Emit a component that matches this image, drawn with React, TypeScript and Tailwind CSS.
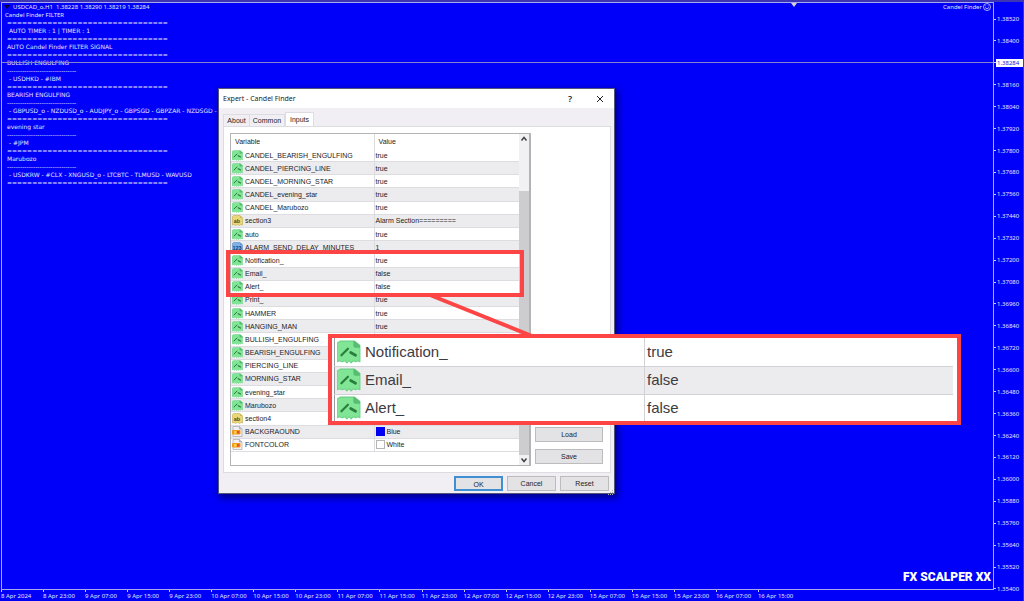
import clsx from "clsx";

type IconKind = "bool" | "text" | "int" | "color";

type InputRow = {
  name: string;
  value?: string;
  icon: IconKind;
  swatch?: "blue" | "white";
};

const inputs: InputRow[] = [
  { name: "CANDEL_BEARISH_ENGULFING", value: "true", icon: "bool" },
  { name: "CANDEL_PIERCING_LINE", value: "true", icon: "bool" },
  { name: "CANDEL_MORNING_STAR", value: "true", icon: "bool" },
  { name: "CANDEL_evening_star", value: "true", icon: "bool" },
  { name: "CANDEL_Marubozo", value: "true", icon: "bool" },
  { name: "section3", value: "Alarm Section=========", icon: "text" },
  { name: "auto", value: "true", icon: "bool" },
  { name: "ALARM_SEND_DELAY_MINUTES", value: "1", icon: "int" },
  { name: "Notification_", value: "true", icon: "bool" },
  { name: "Email_", value: "false", icon: "bool" },
  { name: "Alert_", value: "false", icon: "bool" },
  { name: "Print_", value: "true", icon: "bool" },
  { name: "HAMMER", value: "true", icon: "bool" },
  { name: "HANGING_MAN", value: "true", icon: "bool" },
  { name: "BULLISH_ENGULFING", icon: "bool" },
  { name: "BEARISH_ENGULFING", icon: "bool" },
  { name: "PIERCING_LINE", icon: "bool" },
  { name: "MORNING_STAR", icon: "bool" },
  { name: "evening_star", icon: "bool" },
  { name: "Marubozo", icon: "bool" },
  { name: "section4", icon: "text" },
  { name: "BACKGRAOUND", value: "Blue", icon: "color", swatch: "blue" },
  { name: "FONTCOLOR", value: "White", icon: "color", swatch: "white" },
];

const prices = [
  "1.38520", "1.38400", "1.38284", "1.38160", "1.38040", "1.37920", "1.37800", "1.37680", "1.37560",
  "1.37440", "1.37320", "1.37200", "1.37080", "1.36960", "1.36840", "1.36720", "1.36600", "1.36480",
  "1.36360", "1.36240", "1.36120", "1.36000", "1.35880", "1.35760", "1.35640", "1.35520", "1.35400",
];

const currentPrice = "1.38284";

const times = [
  "8 Apr 2024", "8 Apr 23:00", "9 Apr 07:00", "9 Apr 15:00", "9 Apr 23:00", "10 Apr 07:00", "10 Apr 15:00",
  "10 Apr 23:00", "11 Apr 07:00", "11 Apr 15:00", "11 Apr 23:00", "12 Apr 07:00", "12 Apr 15:00",
  "12 Apr 23:00", "15 Apr 07:00", "15 Apr 15:00", "15 Apr 23:00", "16 Apr 07:00", "16 Apr 15:00",
];

const RULE = "=".repeat(32);
const DASH = "-".repeat(32);

const comment = [
  RULE,
  " AUTO TIMER : 1 | TIMER : 1",
  RULE,
  "AUTO Candel Finder FILTER SIGNAL",
  RULE,
  "BULLISH ENGULFING",
  DASH,
  " - USDHKD - #IBM",
  RULE,
  "BEARISH ENGULFING",
  DASH,
  " - GBPUSD_o - NZDUSD_o - AUDJPY_o - GBPSGD - GBPZAR - NZDSGD -",
  RULE,
  "evening star",
  DASH,
  " - #JPM",
  RULE,
  "Marubozo",
  DASH,
  " - USDKRW - #CLX - XNGUSD_o - LTCBTC - TLMUSD - WAVUSD",
  RULE,
];

function TypeIcon({ kind, className }: { kind: IconKind; className: string }) {
  if (kind === "color") {
    return (
      <svg viewBox="0 0 22 22" className={className} aria-hidden="true">
        <path d="M2 1h13l5 5v15H2z" fill="#f1f1f3" stroke="#8b8b90" />
        <path d="M15 1v5h5" fill="#c9c9ce" stroke="#8b8b90" />
        <rect x="0" y="8" width="17" height="9" rx="2" fill="#f39a1c" />
        <rect x="4" y="10" width="5" height="5" fill="#ffd34a" />
        <rect x="10" y="10" width="5" height="5" fill="#e8502a" />
      </svg>
    );
  }
  if (kind === "text" || kind === "int") {
    const isText = kind === "text";
    return (
      <svg viewBox="0 0 22 22" className={className} aria-hidden="true">
        <path
          d="M3 1h13l5 5v14l-3-1-3 2-4-2-4 2-3-2-3 1V3z"
          fill={isText ? "#ead777" : "#7db2e8"}
          stroke={isText ? "#b9a13c" : "#4b7fb8"}
        />
        <path d="M16 1v5h5" fill={isText ? "#cdb755" : "#5c93cd"} />
        <text
          x="10"
          y="15"
          textAnchor="middle"
          fontSize="11"
          fontWeight="700"
          fontFamily="Liberation Sans, sans-serif"
          fill={isText ? "#5d4a12" : "#173f70"}
        >
          {isText ? "ab" : "123"}
        </text>
      </svg>
    );
  }
  return (
    <svg viewBox="0 0 22 22" className={className} aria-hidden="true">
      <path
        d="M3 1h13l5 4v15l-2-1-2 1-2-1-2 2-2-2-2 2-2-2-2 1-3-1-2 1V3z"
        fill="#80e695"
        stroke="#6fd088"
        strokeLinejoin="round"
      />
      <path d="M15 1v4q0 2 2 2h4V5l-5-4z" fill="#56bd72" />
      <path d="M4 14 10 8" fill="none" stroke="#2a7d3f" strokeWidth="2" strokeLinecap="round" />
      <path d="M12.500 11.500 17 14" fill="none" stroke="#2a7d3f" strokeWidth="2.500" strokeLinecap="round" />
    </svg>
  );
}

function DialogButton({ label, className }: { label: string; className?: string }) {
  return (
    <button
      type="button"
      className={clsx("h-[15px] border text-center leading-[13px]", className ?? "border-[#bcbcbe] bg-[#e3e2e5]")}
    >
      {label}
    </button>
  );
}

function Chevron({ up }: { up?: boolean }) {
  return (
    <svg viewBox="0 0 10 10" className="size-[10px]" aria-hidden="true">
      <path d={up ? "M2.500 6.500 5 3.500 7.500 6.500" : "M2.500 3.500 5 6.500 7.500 3.500"} fill="none" stroke="#444" strokeWidth="1.500" />
    </svg>
  );
}

function InputsTable() {
  return (
    <div className="flex h-[333px] w-[301px] border border-r-2 border-[#b4b3b6] bg-white">
      <div className="min-w-0 flex-1">
        <table className="h-[318px] w-full table-fixed border-collapse text-left">
          <thead>
            <tr className="h-[15px]">
              <th className="w-[143px] border-r border-[#dcdcde] p-0 pl-1 font-normal">Variable</th>
              <th className="p-0 pl-1 font-normal">Value</th>
            </tr>
          </thead>
          <tbody>
            {inputs.map((row, index) => (
              <tr key={index} className={clsx("border-b border-[#dddce0]", index % 2 === 1 && "bg-[#ecebee]")}>
                <td className="border-r border-[#dcdcde] p-0">
                  <span className="flex items-center gap-[2px] pl-px leading-[11px]">
                    <TypeIcon kind={row.icon} className="size-[11px] shrink-0" />
                    {row.name}
                  </span>
                </td>
                <td className="p-0">
                  <span className="flex items-center gap-[2px] pl-px leading-[11px]">
                    {row.swatch ? (
                      <span
                        className={clsx(
                          "size-[9px] border",
                          row.swatch === "blue" ? "border-[#0000ee] bg-[#0000fa]" : "border-[#b5b5b8] bg-white"
                        )}
                      />
                    ) : null}
                    {row.value}
                  </span>
                </td>
              </tr>
            ))}
          </tbody>
        </table>
      </div>
      <div className="flex w-[10px] flex-col justify-between bg-[#f1f0f3]">
        <Chevron up />
        <div className="mt-[47px] flex-1 bg-[#cdccce]" />
        <Chevron />
      </div>
    </div>
  );
}

function ExpertDialog() {
  return (
    <section
      aria-label="Expert - Candel Finder"
      className="absolute top-[86px] left-[218px] flex h-[406px] w-[397px] flex-col border border-[#55557c] bg-[#f1eff3] font-['Liberation_Sans',Arial,sans-serif] text-[7px] text-[#1c1c1f] shadow-[2px_3px_7px_1px_rgba(0,0,60,0.6)]"
    >
      <header className="flex h-[19px] shrink-0 items-center bg-white pr-2 pl-1 font-['Noto_Sans',sans-serif]">
        <h1 className="flex-1">Expert - Candel Finder</h1>
        <button type="button" aria-label="Help" className="mr-5 w-2 text-[9px] font-semibold">
          ?
        </button>
        <button type="button" aria-label="Close" className="size-3">
          <svg viewBox="0 0 12 12" className="size-3" aria-hidden="true">
            <path d="M3 3 9 9M9 3 3 9" stroke="#222" fill="none" />
          </svg>
        </button>
      </header>
      <nav className="flex h-[18px] shrink-0 items-end pl-1">
        <button type="button" className="h-3 w-[27px] border border-b-0 border-[#dddce0] leading-[11px]">
          About
        </button>
        <button type="button" className="h-3 w-[35px] border border-b-0 border-l-0 border-[#dddce0] leading-[11px]">
          Common
        </button>
        <button type="button" className="h-[14px] w-[29px] border border-b-0 border-[#dddce0] bg-white leading-[12px]">
          Inputs
        </button>
      </nav>
      <div className="mr-[3px] ml-1 flex flex-1 gap-1 border border-[#dddce0] bg-white py-[6px] pr-[7px] pl-[6px]">
        <InputsTable />
        <div className="flex flex-1 flex-col justify-end gap-[7px] pb-[2px]">
          <DialogButton label="Load" />
          <DialogButton label="Save" />
        </div>
      </div>
      <footer className="relative flex h-[23px] shrink-0 items-start justify-end gap-1 pt-[3px] pr-[5px]">
        <DialogButton label="OK" className="w-[49px] border-2 border-[#3f8fd2] bg-[#e3e2e5] leading-[11px]" />
        <DialogButton label="Cancel" className="w-[49px] border-[#bcbcbe] bg-[#e3e2e5]" />
        <DialogButton label="Reset" className="w-[49px] border-[#bcbcbe] bg-[#e3e2e5]" />
        <svg viewBox="0 0 6 6" className="absolute right-0 bottom-0 size-[6px]" aria-hidden="true">
          <path d="M4 0h1v1H4zM2 2h1v1H2zM4 2h1v1H4zM0 4h1v1H0zM2 4h1v1H2zM4 4h1v1H4z" fill="#b3b3b6" />
        </svg>
      </footer>
    </section>
  );
}

function Callout() {
  return (
    <>
      <div className="absolute top-[248px] left-[226px] h-[47px] w-[298px] border-4 border-[#fd4545]" />
      <svg viewBox="0 0 110 46" className="absolute top-[291px] left-[426px] h-[46px] w-[110px]" aria-hidden="true">
        <path d="M4 2 106 43" stroke="#fd4545" strokeWidth="4" fill="none" />
      </svg>
      <div className="absolute top-[332px] left-[328px] h-[91px] w-[633px] overflow-hidden border-4 border-[#fd4545] bg-white pr-1 pl-[2px]">
        <table className="w-full table-fixed border-collapse border-l border-[#9c9b9e] text-left font-['Liberation_Sans',Arial,sans-serif] text-[15px] text-[#3d3b42]">
          <tbody>
            {inputs.slice(8, 11).map((row, index) => (
              <tr key={row.name} className={clsx("h-7", index === 1 && "border-y border-[#d2d1d5] bg-[#ecebee]")}>
                <td className="w-[310px] border-r border-[#d2d1d5] p-0">
                  <span className="flex items-center gap-1 pl-[2px] leading-6">
                    <TypeIcon kind="bool" className="size-6 shrink-0" />
                    {row.name}
                  </span>
                </td>
                <td className="p-0 pl-[2px]">{row.value}</td>
              </tr>
            ))}
          </tbody>
        </table>
      </div>
    </>
  );
}

export default function App() {
  return (
    <main className="relative flex h-screen flex-col overflow-hidden border-t-2 border-r border-[#3d35b4] bg-[#0000fa] font-['Noto_Sans',sans-serif] text-[6px] leading-[8px] text-[#e4e4ff]">
      <div className="flex min-h-0 flex-1">
        <div className="relative ml-px flex-1 border border-[#a9a9ee]">
          <div className="absolute inset-x-0 top-[59px] border-t border-[#8484c8]" />
          <svg viewBox="0 0 6 4" className="absolute top-0 left-[789px] h-1 w-[6px]" aria-hidden="true">
            <path d="M0 0h6L3 4z" fill="#d5d5d0" />
          </svg>
          <div className="flex items-center gap-[3px] pl-[2px]">
            <svg viewBox="0 0 6 4" className="h-1 w-[6px]" aria-hidden="true">
              <path d="M0 0h6L3 4z" fill="#00003a" />
            </svg>
            <p className="flex-1 whitespace-pre">USDCAD_o,H1  1.38228 1.38290 1.38219 1.38284</p>
            <p className="flex items-center gap-px pr-[2px]">
              Candel Finder
              <svg viewBox="0 0 16 16" className="size-2" fill="none" stroke="#e4e4ff" strokeWidth="1.500" aria-hidden="true">
                <circle cx="8" cy="8" r="7" />
                <path d="M4 9q4 5 8 0M5.500 5v1.500M10.500 5v1.500" />
              </svg>
            </p>
          </div>
          <p className="pl-[3px]">Candel Finder FILTER</p>
          <div className="pl-[5px] font-['DejaVu_Sans',sans-serif] whitespace-pre">
            {comment.map((line, index) => (
              <p key={index}>{line}</p>
            ))}
          </div>
          <p className="absolute right-[2px] bottom-[4px] font-['Impact','Roboto',sans-serif] text-[12px] leading-4 font-black text-white">
            FX SCALPER XX
          </p>
        </div>
        <ol className="-mb-[3px] flex w-[29px] flex-col justify-between pt-[13px]">
          {prices.map((price) => (
            <li key={price} className="flex items-center">
              <span className="w-[2px] border-t border-[#c6c6f5]" />
              <span className={clsx("h-2 flex-1 pl-px", price === currentPrice && "bg-white text-[#2020d0]")}>{price}</span>
            </li>
          ))}
        </ol>
      </div>
      <ol className="grid h-[11px] w-[78.2%] shrink-0 grid-cols-19 pl-px whitespace-nowrap">
        {times.map((time) => (
          <li key={time} className="min-w-0">
            <span className="block h-[2px] border-l border-[#c6c6f5]" />
            {time}
          </li>
        ))}
      </ol>
      <ExpertDialog />
      <Callout />
    </main>
  );
}
